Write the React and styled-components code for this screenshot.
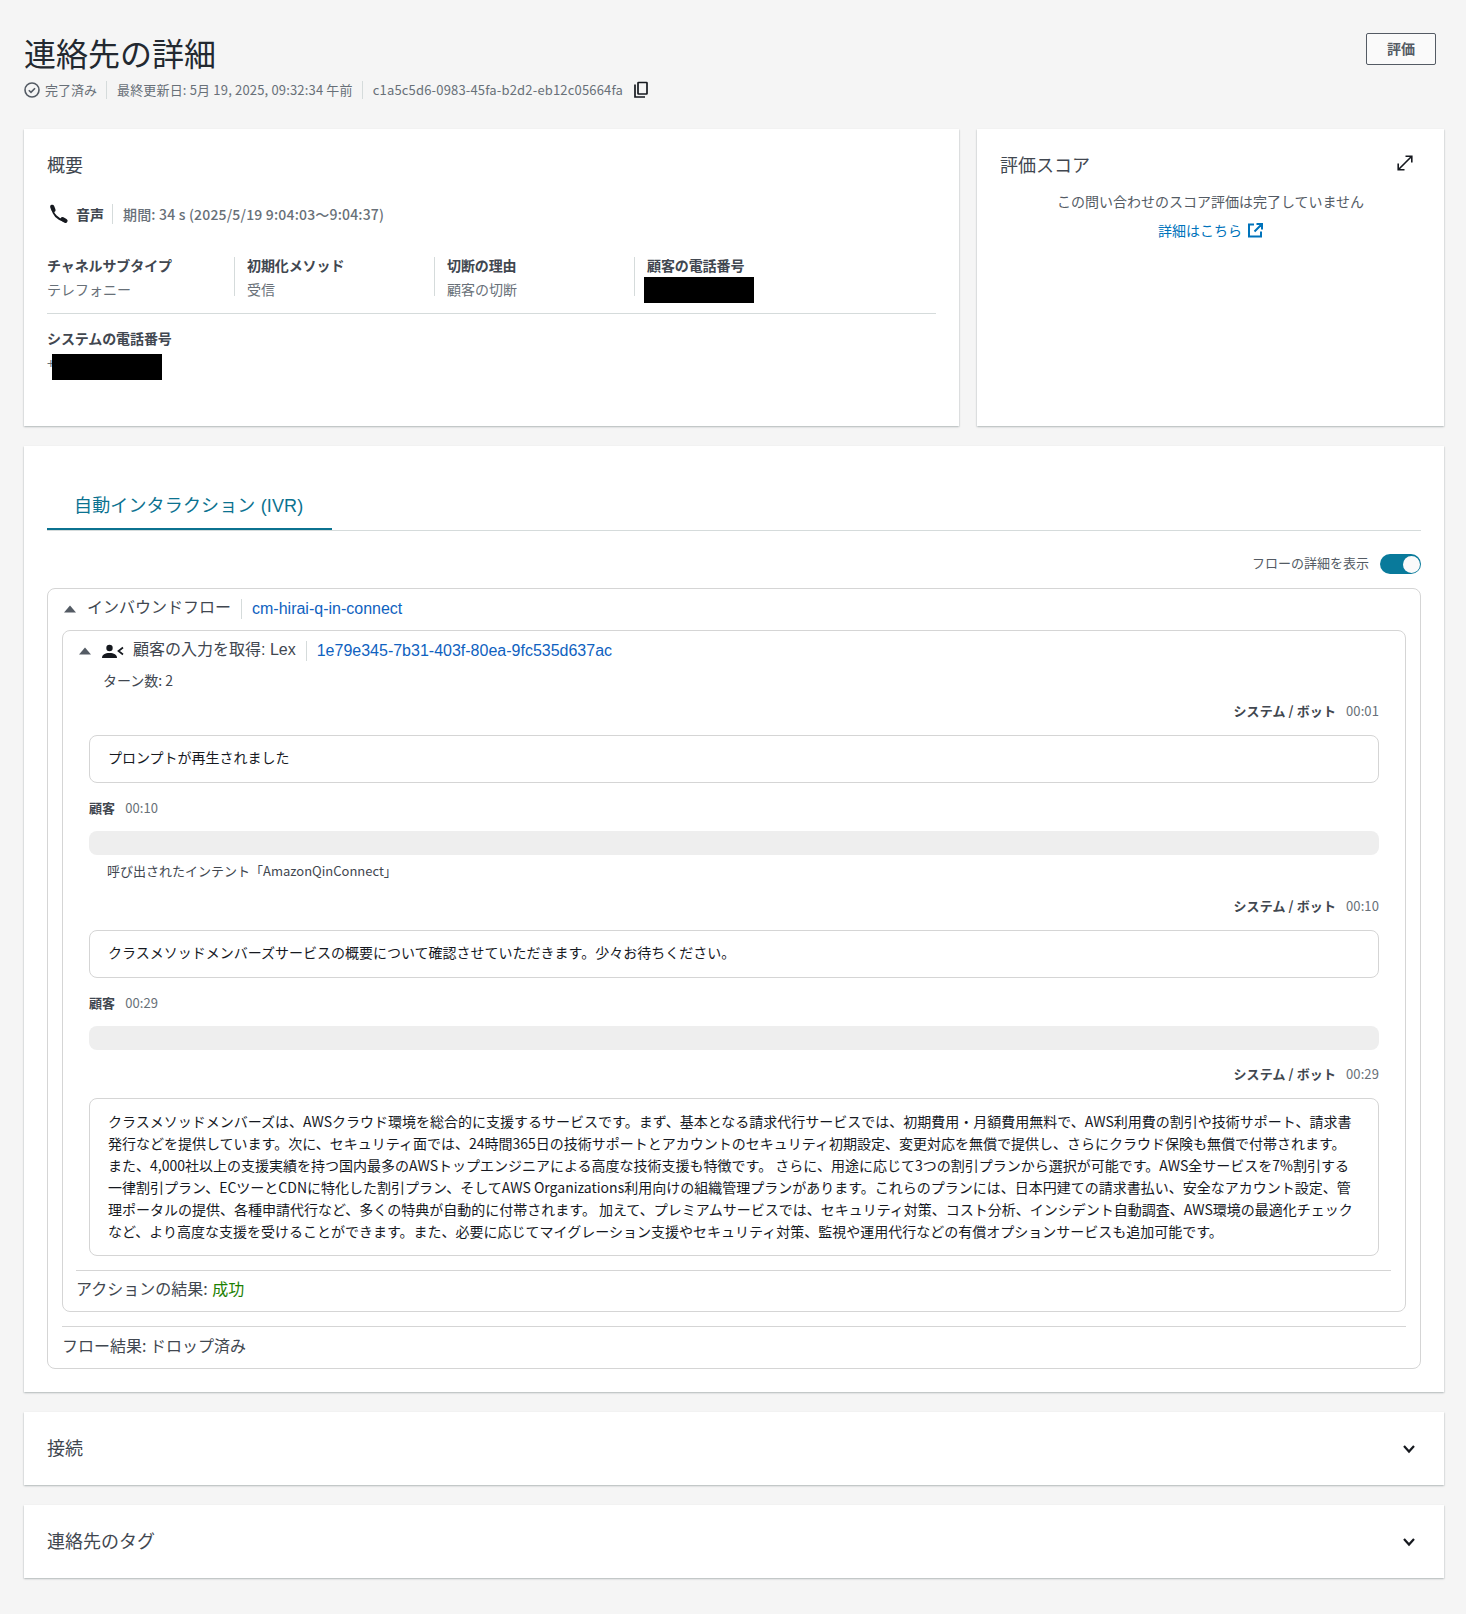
import styled, { createGlobalStyle } from 'styled-components';

const GlobalStyle = createGlobalStyle`
  html, body { margin: 0; padding: 0; background: #f5f5f5; }
  body {
    font-family: "Noto Sans CJK JP", "Noto Sans", sans-serif;
    color: #16191f;
    font-size: 14px;
  }
`;

const sysFont = `"Liberation Sans", "Noto Sans CJK JP", sans-serif`;

function CheckIcon() {
  return (
    <svg width="16" height="16" viewBox="0 0 16 16" fill="none" stroke="#545b64" strokeWidth="1.6">
      <circle cx="8" cy="8" r="7" />
      <path d="M4.8 8.2l2.2 2.2 4-4.2" />
    </svg>
  );
}

function CopyIcon() {
  return (
    <svg width="16" height="18" viewBox="0 0 16 18" fill="none" stroke="#16191f" strokeWidth="1.7">
      <path d="M2 3.5v12.5h10" />
      <rect x="5" y="1.5" width="9" height="11.5" rx="0.5" />
    </svg>
  );
}

function PhoneIcon() {
  return (
    <svg width="20" height="20" viewBox="0 0 20 20" fill="none" stroke="#16191f" strokeLinecap="round">
      <path d="M3.500 5c.5 5.500 5 10 11 11.500" strokeWidth="2" />
      <path d="M3.200 2.800 4.500 6" strokeWidth="4.200" />
      <path d="M13.500 15.200 16.500 16.800" strokeWidth="4.200" />
    </svg>
  );
}

function ExpandIcon() {
  return (
    <svg width="16" height="16" viewBox="0 0 16 16" fill="none" stroke="#16191f" strokeWidth="1.6">
      <path d="M1.500 14.500 14.500 1.500M8.500 1.200h6.300v6.300M1.200 8.500v6.300h6.300" />
    </svg>
  );
}

function ExternalIcon() {
  return (
    <svg width="15" height="15" viewBox="0 0 15 15" fill="none" stroke="#0073bb" strokeWidth="2">
      <path d="M6 1.500H1v12h12V8.500M8.500 1H14v5.500M14 1 6.500 8.500" />
    </svg>
  );
}

function Caret() {
  return (
    <svg width="12" height="8" viewBox="0 0 12 8" fill="#545b64">
      <path d="M6 0.500 12 7.500H0z" />
    </svg>
  );
}

function LexIcon() {
  return (
    <svg width="22" height="15" viewBox="0 0 22 15" fill="#16191f">
      <circle cx="7.500" cy="4" r="3.200" />
      <path d="M0 14c0-3.500 3-5 7.500-5s7.500 1.500 7.500 5z" />
      <path d="M21 3.500 16.500 7l4.500 3.500" fill="none" stroke="#16191f" strokeWidth="1.700" />
    </svg>
  );
}

function Chevron() {
  return (
    <svg width="14" height="10" viewBox="0 0 14 10" fill="none" stroke="#16191f" strokeWidth="2.200">
      <path d="M2 2l5 5.500L12 2" />
    </svg>
  );
}

function ToggleSwitch() {
  return (
    <Toggle>
      <Knob />
    </Toggle>
  );
}

const turns = [
  { who: 'system', time: '00:01', text: 'プロンプトが再生されました' },
  { who: 'customer', time: '00:10', intent: '呼び出されたインテント「AmazonQinConnect」' },
  { who: 'system', time: '00:10', text: 'クラスメソッドメンバーズサービスの概要について確認させていただきます。少々お待ちください。' },
  { who: 'customer', time: '00:29' },
  {
    who: 'system',
    time: '00:29',
    lines: [
      'クラスメソッドメンバーズは、AWSクラウド環境を総合的に支援するサービスです。まず、基本となる請求代行サービスでは、初期費用・月額費用無料で、AWS利用費の割引や技術サポート、請求書',
      '発行などを提供しています。次に、セキュリティ面では、24時間365日の技術サポートとアカウントのセキュリティ初期設定、変更対応を無償で提供し、さらにクラウド保険も無償で付帯されます。',
      'また、4,000社以上の支援実績を持つ国内最多のAWSトップエンジニアによる高度な技術支援も特徴です。 さらに、用途に応じて3つの割引プランから選択が可能です。AWS全サービスを7%割引する',
      '一律割引プラン、ECツーとCDNに特化した割引プラン、そしてAWS Organizations利用向けの組織管理プランがあります。これらのプランには、日本円建ての請求書払い、安全なアカウント設定、管',
      '理ポータルの提供、各種申請代行など、多くの特典が自動的に付帯されます。 加えて、プレミアムサービスでは、セキュリティ対策、コスト分析、インシデント自動調査、AWS環境の最適化チェック',
      'など、より高度な支援を受けることができます。また、必要に応じてマイグレーション支援やセキュリティ対策、監視や運用代行などの有償オプションサービスも追加可能です。',
    ],
  },
];

const columns = [
  { label: 'チャネルサブタイプ', value: 'テレフォニー' },
  { label: '初期化メソッド', value: '受信' },
  { label: '切断の理由', value: '顧客の切断' },
  { label: '顧客の電話番号', redacted: true },
];

function Turn({ turn, last }) {
  if (turn.who === 'customer') {
    return (
      <>
        <TurnHead>
          <Speaker>顧客</Speaker>
          <Time>{turn.time}</Time>
        </TurnHead>
        <CustomerBar $withIntent={Boolean(turn.intent)} />
        {turn.intent && <Intent>{turn.intent}</Intent>}
      </>
    );
  }
  return (
    <>
      <TurnHead $right>
        <Speaker>システム / ボット</Speaker>
        <Time>{turn.time}</Time>
      </TurnHead>
      <Bubble $multi={Boolean(turn.lines)} $last={last}>
        {turn.text}
        {turn.lines && turn.lines.map((line) => <BubbleLine key={line}>{line}</BubbleLine>)}
      </Bubble>
    </>
  );
}

export default function App() {
  return (
    <Page>
      <GlobalStyle />
      <Header>
        <div>
          <Title>連絡先の詳細</Title>
          <Meta>
            <MetaItem>
              <CheckIcon />
              <span>完了済み</span>
            </MetaItem>
            <MetaItem $divided>最終更新日: 5月 19, 2025, 09:32:34 午前</MetaItem>
            <MetaItem $divided>c1a5c5d6-0983-45fa-b2d2-eb12c05664fa</MetaItem>
            <CopyIcon />
          </Meta>
        </div>
        <EvaluateButton>評価</EvaluateButton>
      </Header>

      <TopGrid>
        <SummaryCard>
          <CardTitle>概要</CardTitle>
          <VoiceRow>
            <PhoneIcon />
            <VoiceLabel>音声</VoiceLabel>
            <Duration>期間: 34 s (2025/5/19 9:04:03〜9:04:37)</Duration>
          </VoiceRow>
          <Columns>
            {columns.map((col) => (
              <Column key={col.label}>
                <FieldLabel>{col.label}</FieldLabel>
                <FieldValue>
                  {col.value}
                  {col.redacted && <Redaction $left={-3} $top={-3} />}
                </FieldValue>
              </Column>
            ))}
          </Columns>
          <FieldLabel>システムの電話番号</FieldLabel>
          <SystemValue>
            +
            <Redaction $left={5} $top={0} />
          </SystemValue>
        </SummaryCard>

        <ScoreCard>
          <ScoreHead>
            <CardTitle>評価スコア</CardTitle>
            <ExpandSlot>
              <ExpandIcon />
            </ExpandSlot>
          </ScoreHead>
          <ScoreMessage>この問い合わせのスコア評価は完了していません</ScoreMessage>
          <ScoreLink>
            詳細はこちら
            <ExternalIcon />
          </ScoreLink>
        </ScoreCard>
      </TopGrid>

      <FlowCard>
        <Tabs>
          <ActiveTab>自動インタラクション (IVR)</ActiveTab>
        </Tabs>
        <ToggleRow>
          <ToggleLabel>フローの詳細を表示</ToggleLabel>
          <ToggleSwitch />
        </ToggleRow>
        <OuterFlow>
          <FlowHead>
            <Caret />
            <FlowName>インバウンドフロー</FlowName>
            <FlowLink>cm-hirai-q-in-connect</FlowLink>
          </FlowHead>
          <InnerFlow>
            <InnerHead>
              <Caret />
              <LexIcon />
              <FlowName>顧客の入力を取得: Lex</FlowName>
              <FlowLink>1e79e345-7b31-403f-80ea-9fc535d637ac</FlowLink>
            </InnerHead>
            <TurnCount>ターン数: 2</TurnCount>
            <Turns>
              {turns.map((turn, i) => (
                <Turn key={i} turn={turn} last={i === turns.length - 1} />
              ))}
            </Turns>
            <ActionResult>
              アクションの結果: <Success>成功</Success>
            </ActionResult>
          </InnerFlow>
          <FlowResult>フロー結果: ドロップ済み</FlowResult>
        </OuterFlow>
      </FlowCard>

      <CollapsedCard>
        <CollapsedTitle>接続</CollapsedTitle>
        <Chevron />
      </CollapsedCard>
      <CollapsedCard>
        <CollapsedTitle>連絡先のタグ</CollapsedTitle>
        <Chevron />
      </CollapsedCard>
    </Page>
  );
}

const Page = styled.div`
  box-sizing: border-box;
  width: 1466px;
  height: 1614px;
  padding: 32px 22px 0 24px;
  overflow: hidden;
`;

const Header = styled.header`
  display: flex;
  justify-content: space-between;
  align-items: flex-start;
  height: 97px;
`;

const Title = styled.h1`
  margin: 0;
  font-size: 32px;
  line-height: 40px;
  font-weight: 400;
  color: #232930;
`;

const Meta = styled.div`
  display: flex;
  align-items: center;
  height: 18px;
  margin-top: 9px;
  font-size: 13px;
  line-height: 18px;
  color: #687078;

  svg:last-child {
    margin-left: 10px;
  }
`;

const MetaItem = styled.span`
  display: flex;
  align-items: center;
  gap: 5px;
  ${(p) => p.$divided && `
    margin-left: 9px;
    padding-left: 10px;
    border-left: 1px solid #d5dbdb;
    letter-spacing: 0.17px;
  `}
`;

const EvaluateButton = styled.button`
  box-sizing: border-box;
  width: 70px;
  height: 32px;
  margin: 1px 8px 0 0;
  padding: 0 0 2px;
  background: #fafafa;
  border: 1px solid #545b64;
  border-radius: 2px;
  font-family: inherit;
  font-size: 14px;
  font-weight: 700;
  color: #545b64;
`;

const card = `
  box-sizing: border-box;
  background: #fff;
  box-shadow: 0 1px 2px 0 rgba(0, 28, 36, 0.2), 1px 1px 1px 0 rgba(0, 28, 36, 0.04), -1px 1px 1px 0 rgba(0, 28, 36, 0.04);
`;

const TopGrid = styled.div`
  display: grid;
  grid-template-columns: 935px 467px;
  gap: 18px;
  height: 297px;
`;

const SummaryCard = styled.section`
  ${card}
  padding: 21px 23px 0 23px;
`;

const ScoreCard = styled.section`
  ${card}
  padding: 21px 23px 0 23px;
`;

const CardTitle = styled.h2`
  margin: 0;
  font-size: 18px;
  line-height: 28px;
  font-weight: 400;
  color: #414750;
`;

const VoiceRow = styled.div`
  display: flex;
  align-items: center;
  height: 20px;
  margin-top: 26px;
  padding-left: 2px;
`;

const VoiceLabel = styled.span`
  margin-left: 7px;
  padding-right: 8px;
  border-right: 1px solid #d5dbdb;
  font-weight: 700;
  font-size: 14px;
  line-height: 20px;
  color: #414750;
`;

const Duration = styled.span`
  margin-left: 10px;
  font-size: 14px;
  font-weight: 500;
  letter-spacing: 0.18px;
  color: #687078;
`;

const Columns = styled.div`
  display: grid;
  grid-template-columns: 187px repeat(3, 200px);
  margin-top: 33px;
  padding-bottom: 17px;
  margin-bottom: 16px;
  border-bottom: 1px solid #d5dbdb;
`;

const Column = styled.div`
  box-sizing: border-box;
  height: 39px;
  padding-left: 12px;
  border-left: 1px solid #d5dbdb;

  &:first-child {
    padding-left: 0;
    border-left: none;
  }
`;

const FieldLabel = styled.div`
  font-size: 14px;
  line-height: 16px;
  font-weight: 700;
  letter-spacing: -0.1px;
  color: #414750;
`;

const FieldValue = styled.div`
  position: relative;
  margin-top: 7px;
  font-size: 14px;
  line-height: 18px;
  color: #687078;
`;

const SystemValue = styled(FieldValue)`
  margin-top: 8px;
  height: 25px;
`;

const Redaction = styled.div`
  position: absolute;
  left: ${(p) => p.$left}px;
  top: ${(p) => p.$top}px;
  width: 110px;
  height: 26px;
  background: #000;
`;

const ScoreHead = styled.div`
  display: flex;
  justify-content: space-between;
  align-items: center;
  padding-right: 8px;
`;

const ExpandSlot = styled.span`
  display: flex;
  margin-top: -2px;
`;

const ScoreMessage = styled.div`
  margin-top: 13px;
  text-align: center;
  font-size: 14px;
  line-height: 20px;
  color: #545b64;
`;

const ScoreLink = styled.div`
  display: flex;
  justify-content: center;
  align-items: center;
  gap: 6px;
  margin-top: 9px;
  font-size: 14px;
  line-height: 20px;
  color: #0073bb;
`;

const FlowCard = styled.section`
  ${card}
  height: 946px;
  margin-top: 20px;
  padding: 36px 23px 0 23px;
`;

const Tabs = styled.div`
  height: 48px;
  border-bottom: 1px solid #d5dbdb;
`;

const ActiveTab = styled.div`
  box-sizing: border-box;
  display: inline-block;
  width: 285px;
  height: 48px;
  padding: 11px 0 0 27px;
  border-bottom: 2px solid #0b7290;
  font-family: ${sysFont};
  font-size: 18px;
  line-height: 26px;
  font-weight: 400;
  letter-spacing: 0.15px;
  color: #0b7290;
`;

const ToggleRow = styled.div`
  display: flex;
  justify-content: flex-end;
  align-items: center;
  gap: 11px;
  height: 20px;
  margin-top: 23px;
  font-size: 13px;
  color: #545b64;
`;

const ToggleLabel = styled.span`
  padding-bottom: 4px;
`;

const Toggle = styled.span`
  position: relative;
  display: block;
  width: 41px;
  height: 20px;
  background: #097a9b;
  border-radius: 10px;
`;

const Knob = styled.span`
  position: absolute;
  right: 1px;
  top: 1.500px;
  width: 17px;
  height: 17px;
  background: #fafafa;
  border-radius: 50%;
`;

const OuterFlow = styled.div`
  box-sizing: border-box;
  height: 781px;
  margin-top: 14px;
  padding: 0 14px;
  border: 1px solid #d5d5d5;
  border-radius: 8px;
`;

const FlowHead = styled.div`
  display: flex;
  align-items: center;
  height: 39px;
  margin-bottom: 2px;
  padding-left: 2px;

  svg:first-child {
    margin-right: 11px;
  }
`;

const FlowName = styled.span`
  padding: 0 10px 2px 0;
  border-right: 1px solid #d5dbdb;
  font-family: ${sysFont};
  font-size: 16px;
  line-height: 18px;
  color: #414750;
`;

const FlowLink = styled.span`
  margin-left: 10px;
  font-family: ${sysFont};
  font-size: 16px;
  color: #0f62c0;
`;

const InnerFlow = styled.div`
  box-sizing: border-box;
  height: 682px;
  padding: 0 14px 0 13px;
  border: 1px solid #d5d5d5;
  border-radius: 8px;
`;

const InnerHead = styled.div`
  display: flex;
  align-items: center;
  height: 40px;
  padding-left: 3px;

  svg:first-child {
    margin-right: 11px;
  }

  svg:nth-child(2) {
    margin-right: 9px;
  }
`;

const TurnCount = styled.div`
  margin: -2px 0 0 27px;
  padding-top: 1px;
  font-size: 14px;
  line-height: 20px;
  color: #414750;
`;

const Turns = styled.div`
  margin: 12px 12px 0 13px;
  display: flex;
  flex-direction: column;
`;

const TurnHead = styled.div`
  box-sizing: border-box;
  display: flex;
  align-items: center;
  justify-content: ${(p) => (p.$right ? 'flex-end' : 'flex-start')};
  gap: 10px;
  height: 20px;
  padding-bottom: ${(p) => (p.$right ? '4px' : '2px')};
  margin-bottom: 13px;
`;

const Speaker = styled.span`
  font-size: 13px;
  font-weight: 700;
  letter-spacing: 0.1px;
  color: #414750;
`;

const Time = styled.span`
  font-size: 13px;
  letter-spacing: 0.1px;
  color: #687078;
`;

const Bubble = styled.div`
  box-sizing: border-box;
  padding: ${(p) => (p.$multi ? '11px 18px 13px' : '11px 18px 15px')};
  margin-bottom: ${(p) => (p.$last ? '14px' : '15px')};
  border: 1px solid #d5d5d5;
  border-radius: 8px;
  font-size: 14px;
  line-height: 20px;
  color: #16191f;
`;

const BubbleLine = styled.div`
  line-height: 22px;
  white-space: nowrap;
`;

const CustomerBar = styled.div`
  height: 24px;
  margin-bottom: ${(p) => (p.$withIntent ? '7px' : '15px')};
  background: #eee;
  border-radius: 8px;
`;

const Intent = styled.div`
  margin: 0 0 17px 18px;
  font-size: 13px;
  line-height: 18px;
  color: #414750;
`;

const ActionResult = styled.div`
  padding-top: 5px;
  border-top: 1px solid #d5d5d5;
  font-size: 16px;
  line-height: 24px;
  word-spacing: 1px;
  color: #414750;
`;

const Success = styled.span`
  color: #1d8102;
`;

const FlowResult = styled.div`
  margin-top: 14px;
  padding-top: 6px;
  border-top: 1px solid #d5d5d5;
  font-size: 16px;
  line-height: 24px;
  color: #414750;
`;

const CollapsedCard = styled.section`
  ${card}
  display: flex;
  justify-content: space-between;
  align-items: center;
  height: 73px;
  margin-top: 20px;
  padding: 0 28px 0 23px;
`;

const CollapsedTitle = styled(CardTitle)`
  padding-bottom: 4px;
`;
